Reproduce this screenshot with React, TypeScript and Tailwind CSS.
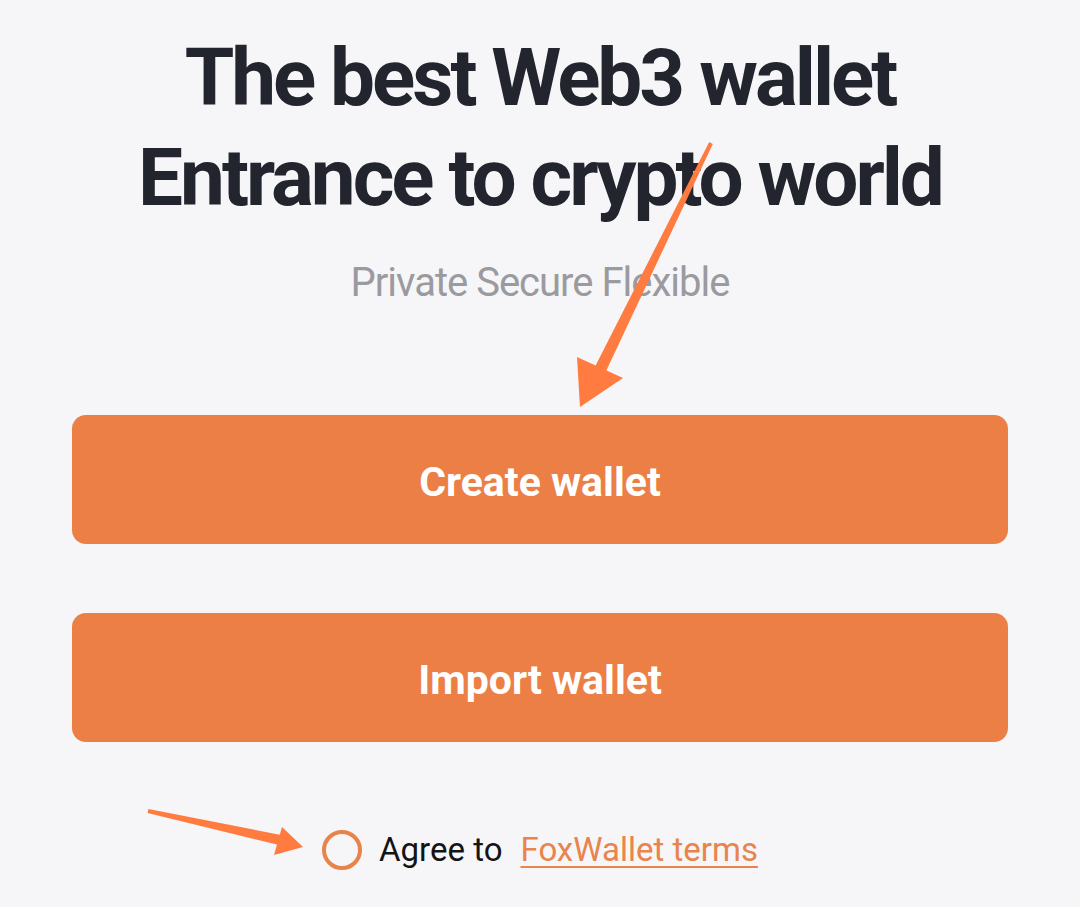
import React, { useState } from 'react';

export default function App() {
  const [agreed, setAgreed] = useState(false);

  return (
    <div className="relative h-[907px] w-[1080px] overflow-hidden bg-[#f6f6f8] font-['Roboto',sans-serif]">
      <div className="flex flex-col items-center pt-[28px]">
        <h1 className="text-center text-[80px] font-bold leading-[100px] tracking-[-3px] text-[#23252e]">
          The best Web3 wallet
          <br />
          Entrance to crypto world
        </h1>
        <p className="mt-[31px] text-[40px] leading-[48px] tracking-[-1px] text-[#9a9a9f]">Private Secure Flexible</p>

        <div className="mt-[108px] flex w-full flex-col gap-[69px] px-[72px]">
          <button className="h-[129px] w-full rounded-[14px] bg-[#ec7f45] pt-[6px] text-[41px] font-bold text-white">
            Create wallet
          </button>
          <button className="h-[129px] w-full rounded-[14px] bg-[#ec7f45] pt-[6px] text-[41px] font-bold text-white">
            Import wallet
          </button>
        </div>

        <div className="mt-[88px] flex items-center">
          <button
            onClick={() => setAgreed(!agreed)}
            className="flex h-[40px] w-[40px] items-center justify-center rounded-full border-[4px] border-[#e8834a]"
          >
            {agreed && <span className="h-[18px] w-[18px] rounded-full bg-[#e8834a]" />}
          </button>
          <span className="ml-[17px] text-[33px] leading-[40px] text-[#141414]">Agree to</span>
          <a className="ml-[18px] text-[33px] leading-[40px] text-[#e8844c] underline underline-offset-[5px] decoration-[2px]">
            FoxWallet terms
          </a>
        </div>
      </div>

      {/* annotation arrows */}
      <svg className="pointer-events-none absolute inset-0" width="1080" height="907" viewBox="0 0 1080 907">
        <polygon points="712.8,143.9 709.2,142.1 594.6,367.4 605.4,372.6" fill="#ff7b3f" />
        <polygon points="577,357 623,378 580,407" fill="#ff7b3f" />
        <polygon points="147.6,813 148.4,809 281,835 279,845" fill="#ff7b3f" />
        <polygon points="282,827 303,847 274,855" fill="#ff7b3f" />
      </svg>
    </div>
  );
}
